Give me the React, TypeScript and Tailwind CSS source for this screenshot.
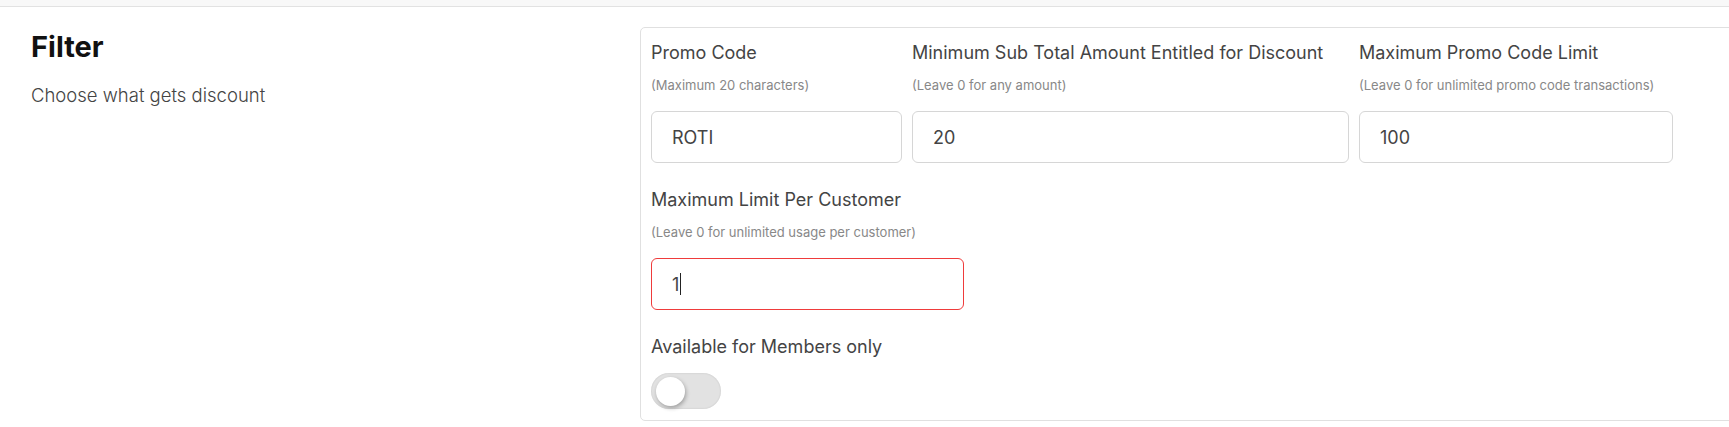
export default function App() {
  return (
    <div
      className="w-full h-[427px] bg-white overflow-hidden"
      style={{ fontFamily: "Inter, 'Noto Sans', sans-serif" }}
    >
      <div className="h-[7px] bg-[#f8f8f8] border-b border-[#e2e2e2]" />

      <div className="flex pt-[20px]">
        {/* left description */}
        <div className="w-[640px] shrink-0 pl-[31px] pt-[4px]">
          <h2 className="text-[29px] leading-[32px] font-bold text-[#111]">Filter</h2>
          <p className="mt-[20px] text-[18.5px] leading-[24px] text-[#444] font-light">
            Choose what gets discount
          </p>
        </div>

        {/* form card */}
        <div className="w-[1200px] shrink-0 border border-[#e0e0e0] rounded-[5px] pl-[10px] pt-[13px] pb-[11px]">
          <div className="flex gap-[10px]">
            <Field label="Promo Code" hint="(Maximum 20 characters)" value="ROTI" width="w-[251px]" />
            <Field
              label="Minimum Sub Total Amount Entitled for Discount"
              hint="(Leave 0 for any amount)"
              value="20"
              width="w-[437px]"
            />
            <Field
              label="Maximum Promo Code Limit"
              hint="(Leave 0 for unlimited promo code transactions)"
              value="100"
              width="w-[314px]"
            />
          </div>

          <div className="mt-[25px]">
            <Field
              label="Maximum Limit Per Customer"
              hint="(Leave 0 for unlimited usage per customer)"
              value="1"
              width="w-[313px]"
              error
            />
          </div>

          <div className="mt-[25px]">
            <div className="text-[18px] leading-[24px] text-[#444]">Available for Members only</div>
            <div className="mt-[14px] w-[70px] h-[36px] rounded-full bg-[#e2e2e2] shadow-[inset_0_0_2px_rgba(0,0,0,0.15)] flex items-center pl-[5px]">
              <div className="w-[29px] h-[29px] rounded-full bg-white shadow-[1px_2px_4px_rgba(0,0,0,0.3)]" />
            </div>
          </div>
        </div>
      </div>
    </div>
  );
}

function Field({
  label,
  hint,
  value,
  width,
  error = false,
}: {
  label: string;
  hint: string;
  value: string;
  width: string;
  error?: boolean;
}) {
  return (
    <div className={width}>
      <div className="text-[18px] leading-[24px] text-[#444] whitespace-nowrap">{label}</div>
      <div className="mt-[11px] text-[13px] leading-[18px] text-[#888] whitespace-nowrap">{hint}</div>
      <div
        className={`mt-[17px] h-[52px] rounded-[6px] border flex items-center pl-[20px] text-[18px] text-[#444] ${
          error ? "border-[#ef3b3b]" : "border-[#d6d6d6]"
        }`}
      >
        {value}
        {error && <span className="ml-[1px] w-px h-[22px] bg-[#222]" />}
      </div>
    </div>
  );
}
